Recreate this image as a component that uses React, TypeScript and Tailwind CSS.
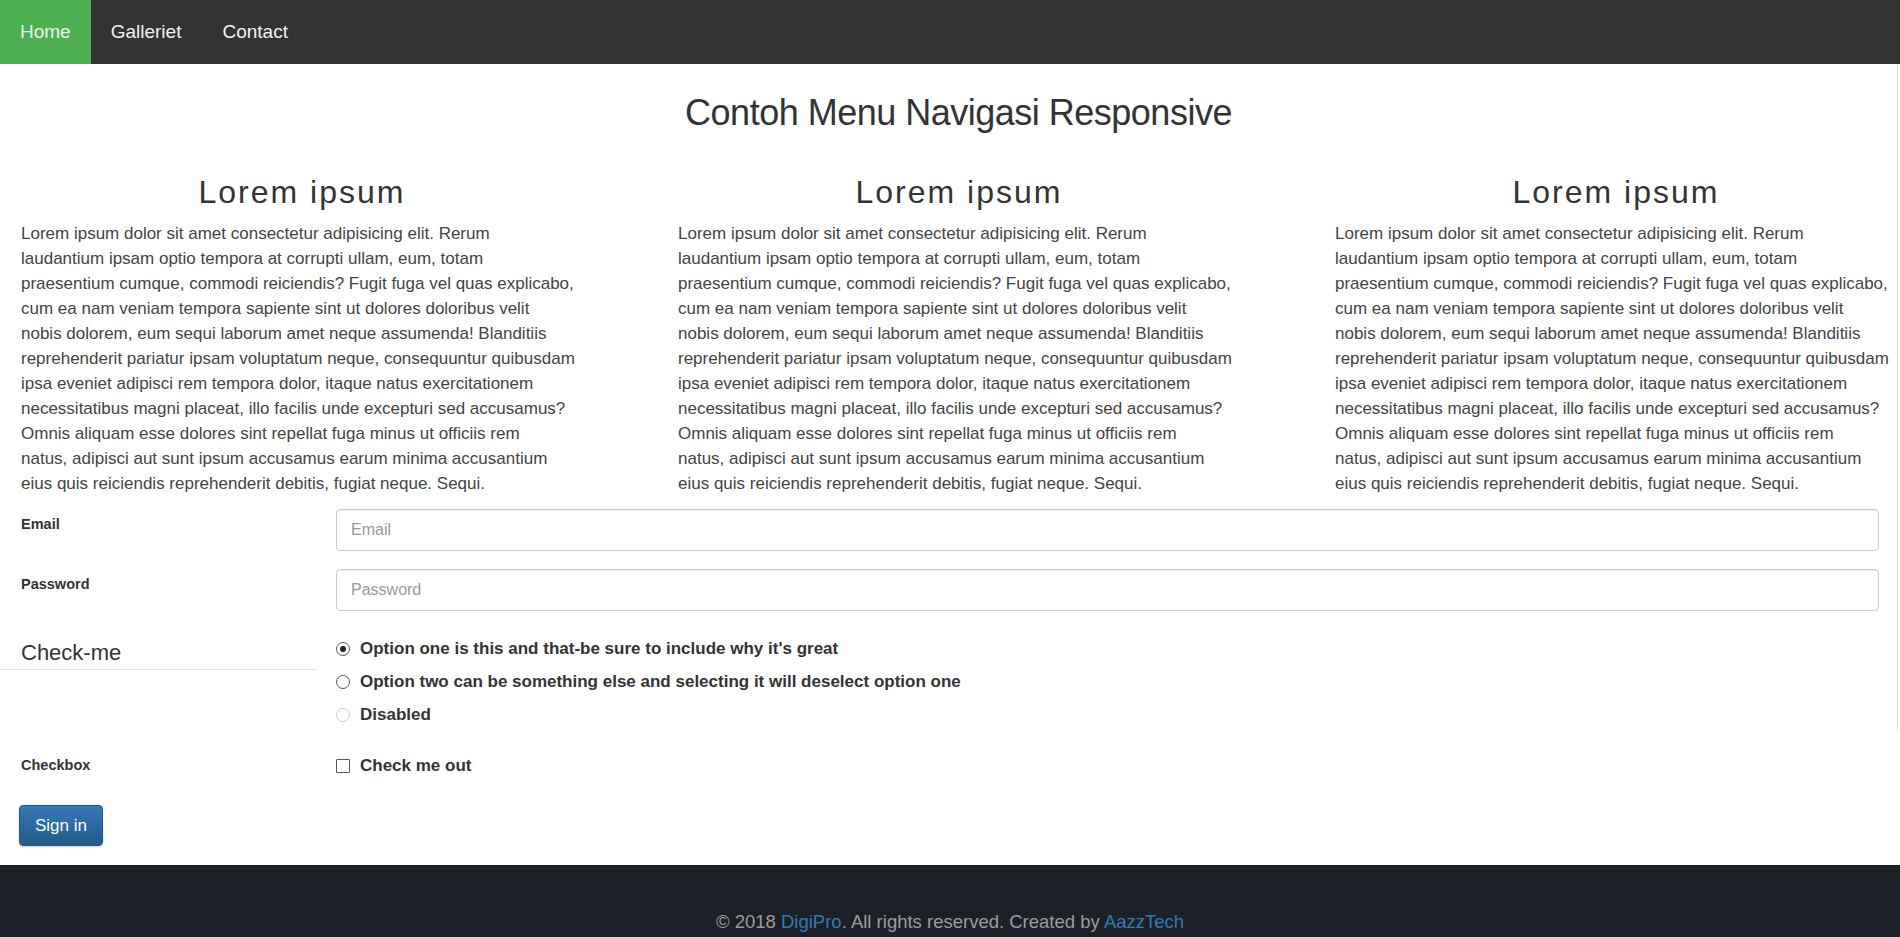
import React from "react";

const lines = [
  "Lorem ipsum dolor sit amet consectetur adipisicing elit. Rerum",
  "laudantium ipsam optio tempora at corrupti ullam, eum, totam",
  "praesentium cumque, commodi reiciendis? Fugit fuga vel quas explicabo,",
  "cum ea nam veniam tempora sapiente sint ut dolores doloribus velit",
  "nobis dolorem, eum sequi laborum amet neque assumenda! Blanditiis",
  "reprehenderit pariatur ipsam voluptatum neque, consequuntur quibusdam",
  "ipsa eveniet adipisci rem tempora dolor, itaque natus exercitationem",
  "necessitatibus magni placeat, illo facilis unde excepturi sed accusamus?",
  "Omnis aliquam esse dolores sint repellat fuga minus ut officiis rem",
  "natus, adipisci aut sunt ipsum accusamus earum minima accusantium",
  "eius quis reiciendis reprehenderit debitis, fugiat neque. Sequi.",
];

function Column() {
  return (
    <div className="w-[562px]">
      <h2 className="text-center text-[32px] leading-[35px] tracking-[2px] text-[#333]">
        Lorem ipsum
      </h2>
      <p className="mt-[11px] text-[17px] leading-[25px] text-[#444]">
        {lines.map((l, i) => (
          <span key={i} className="block whitespace-nowrap">
            {l}
          </span>
        ))}
      </p>
    </div>
  );
}

function Radio({ checked, disabled }: { checked?: boolean; disabled?: boolean }) {
  return (
    <span
      className={
        disabled
          ? "flex h-[14px] w-[14px] items-center justify-center rounded-full border border-[#ccc] bg-white"
          : "flex h-[14px] w-[14px] items-center justify-center rounded-full border border-[#555] bg-white"
      }
    >
      {checked && <span className="h-[6px] w-[6px] rounded-full bg-[#222]" />}
    </span>
  );
}

export default function App() {
  return (
    <div
      className="flex h-[937px] flex-col overflow-hidden bg-white text-[#333]"
      style={{ fontFamily: '"Liberation Sans", Arial, sans-serif' }}
    >
      <nav className="flex h-[64px] shrink-0 bg-[#333] text-[19px] text-[#f2f2f2]">
        <a className="flex items-center bg-[#4caf50] px-[20px]">Home</a>
        <a className="flex items-center px-[20px]">Galleriet</a>
        <a className="flex items-center px-[21px]">Contact</a>
      </nav>

      <div className="w-[1898px] border-r border-[#ddd]">
        <h1 className="mt-[30px] pl-[20px] text-center text-[36px] leading-[38px] tracking-[-0.5px] text-[#333]">
          Contoh Menu Navigasi Responsive
        </h1>

        <div className="mt-[43px] grid grid-cols-[562px_562px_562px] gap-x-[95px] pl-[21px]">
          <Column />
          <Column />
          <Column />
        </div>

        <form className="mt-[13px] pr-[18px]">
          <div className="grid grid-cols-[336px_1fr] items-start">
            <label className="pl-[21px] pt-[5px] text-[14.5px] font-bold leading-[21px]">Email</label>
            <input
              placeholder="Email"
              className="h-[42px] rounded-[4px] border border-[#ccc] px-[14px] text-[16px] shadow-[inset_0_1px_1px_rgba(0,0,0,0.075)] placeholder:text-[#999]"
            />
          </div>
          <div className="mt-[18px] grid grid-cols-[336px_1fr] items-start">
            <label className="pl-[21px] pt-[5px] text-[14.5px] font-bold leading-[21px]">Password</label>
            <input
              placeholder="Password"
              className="h-[42px] rounded-[4px] border border-[#ccc] px-[14px] text-[16px] shadow-[inset_0_1px_1px_rgba(0,0,0,0.075)] placeholder:text-[#999]"
            />
          </div>

          <div className="grid grid-cols-[336px_1fr] items-start">
            <div className="mt-[25px] w-[317px] border-b border-[#e5e5e5] pl-[21px] text-[22px] leading-[33px] text-[#333]">
              Check-me
            </div>
            <div className="mt-[21px] flex flex-col text-[17px] font-bold text-[#333]">
              <label className="flex h-[33px] items-center gap-[10px]">
                <Radio checked />
                Option one is this and that-be sure to include why it's great
              </label>
              <label className="flex h-[33px] items-center gap-[10px]">
                <Radio />
                Option two can be something else and selecting it will deselect option one
              </label>
              <label className="flex h-[33px] items-center gap-[10px]">
                <Radio disabled />
                Disabled
              </label>
            </div>
          </div>
        </form>
      </div>

      <div className="mt-[18px] grid grid-cols-[336px_1fr] items-center">
        <span className="pl-[21px] text-[14.5px] font-bold leading-[33px]">Checkbox</span>
        <label className="flex h-[33px] items-center gap-[10px] text-[17px] font-bold">
          <span className="h-[14px] w-[14px] rounded-[1px] border border-[#555] bg-white" />
          Check me out
        </label>
      </div>

      <div className="mt-[23px] pl-[19px]">
        <button className="h-[41px] rounded-[4px] border border-[#245580] bg-linear-to-b from-[#337ab7] to-[#265a88] px-[15px] text-[17px] text-white shadow-[0_1px_2px_rgba(0,0,0,0.2)]">
          Sign in
        </button>
      </div>

      <footer className="mt-auto h-[72px] shrink-0 bg-[#1c2027] pt-[44px] text-center text-[18.5px] leading-[25px] text-[#9d9d9d]">
        © 2018 <a className="text-[#337ab7]">DigiPro</a>. All rights reserved. Created by{" "}
        <a className="text-[#337ab7]">AazzTech</a>
      </footer>
    </div>
  );
}
